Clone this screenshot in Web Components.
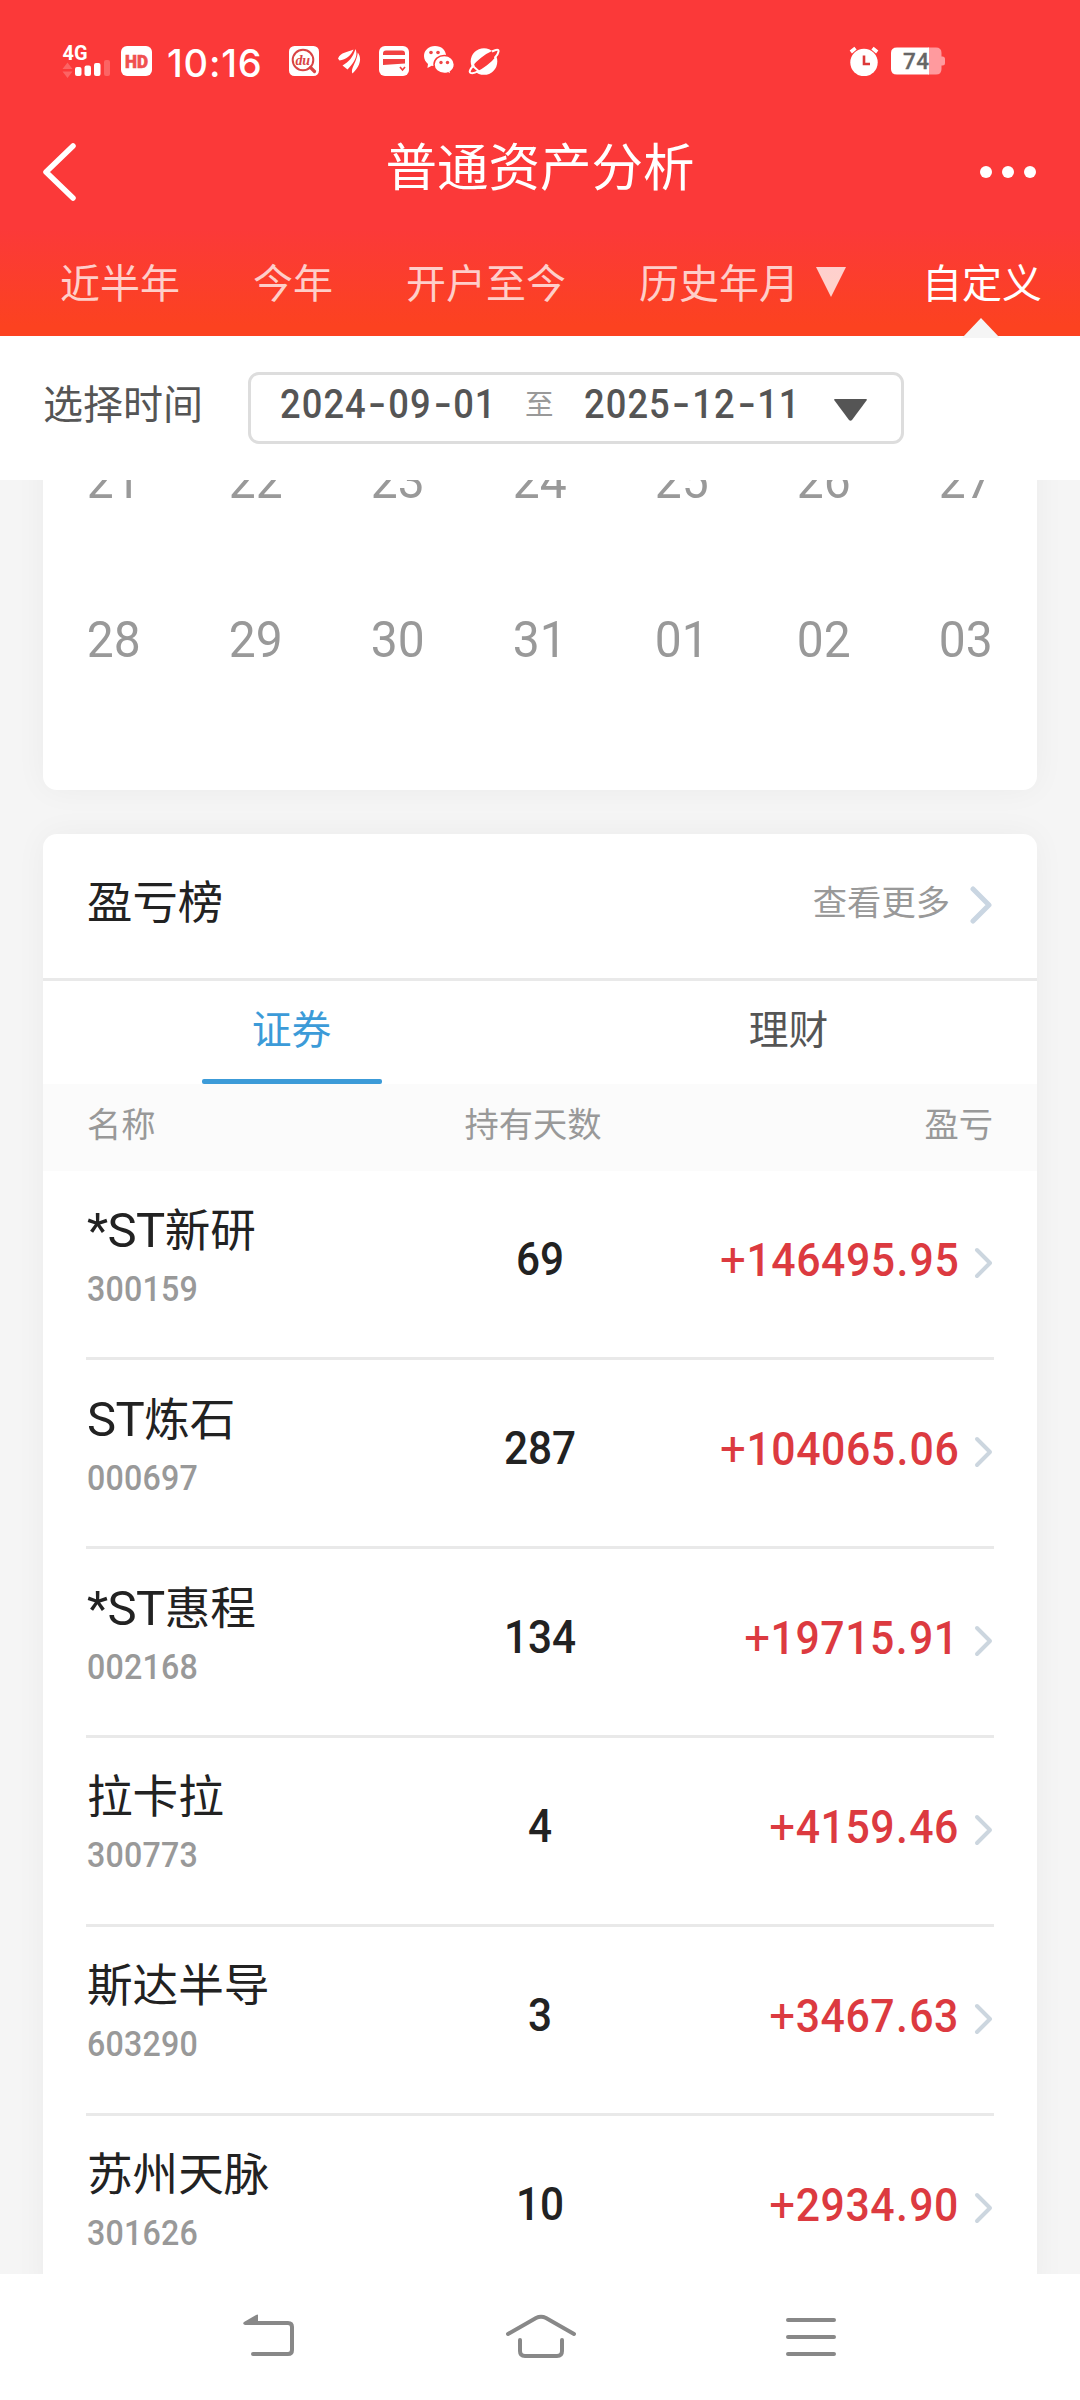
<!DOCTYPE html>
<html lang="zh-CN">
<head>
<meta charset="utf-8">
<title>普通资产分析</title>
<style>
html,body{margin:0;padding:0}
body{width:1080px;height:2400px;overflow:hidden;background:#f5f5f5;font-family:Roboto,"Noto Sans CJK SC",sans-serif;color:#222}
</style>
</head>
<body>
<asset-app></asset-app>
<script>
const define = (name, html) => customElements.define(name, class extends HTMLElement {
  connectedCallback() {
    if (this.shadowRoot) return;
    const t = document.createElement('template');
    t.innerHTML = typeof html === 'function' ? html(this) : html;
    this.attachShadow({mode: 'open'}).appendChild(t.content.cloneNode(true));
  }
});

define('status-bar', `
<style>
:host{display:flex;height:122px;align-items:center;padding:0 135px 0 60px;color:#fff}
svg{display:block;flex:none}
.time{font:500 38px/60px Inter,sans-serif;width:96px;margin:3px 0 0 15px;letter-spacing:.8px;white-space:nowrap}
.sp{flex:1}
</style>
<svg width="50" height="50" viewBox="60 35 50 50" fill="#fff">
  <text x="62.5" y="58.6" font-family="Roboto" font-weight="700" font-size="20" textLength="25" lengthAdjust="spacingAndGlyphs">4G</text>
  <path d="M67.500 61.500l5 6.500h-10zM67.500 77l5-6.500h-10z" opacity=".22"/>
  <rect x="75" y="66" width="6.500" height="9" rx="2"/><rect x="84.500" y="64.500" width="6.500" height="10.500" rx="2"/><rect x="94" y="62" width="6.500" height="13" rx="2"/><rect x="104" y="59" width="6" height="16" rx="2" opacity=".22"/>
</svg>
<svg style="margin-left:11px" width="31" height="30" viewBox="0 0 31 30"><rect width="31" height="30" rx="6" fill="#fff"/><text x="4" y="21.500" fill="#f05050" stroke="#f05050" stroke-width=".6" font-family="Roboto" font-weight="900" font-size="18.500" textLength="23" lengthAdjust="spacingAndGlyphs">HD</text></svg>
<div class="time">10:16</div>
<svg style="margin-left:26px" width="30" height="30" viewBox="0 0 30 30"><rect width="30" height="30" rx="5.500" fill="#fff"/><circle cx="14" cy="14" r="10.300" fill="none" stroke="#d94444" stroke-width="2"/><path d="M21.500 21.500l4 4" stroke="#d94444" stroke-width="3.200" stroke-linecap="round"/><text x="6.500" y="18.500" fill="#d94444" font-family="Liberation Serif" font-style="italic" font-weight="700" font-size="14" textLength="14.500">du</text></svg>
<svg style="margin-left:18px" width="24" height="26" viewBox="0 0 24 26" fill="#fff"><path d="M1 10.500C4 4 10 4.500 16.500 1.500C14 8 9 11.500 2.500 12.500zM5.500 17.500C12 14 16 9 18.500 1C21.500 8 17 15 10.500 21.500zM15.500 25.500C13 21 19.500 15 20.800 4.500C25.500 11 22.500 19 15.500 25.500z"/></svg>
<svg style="margin-left:18px" width="30" height="30" viewBox="0 0 30 30"><rect width="30" height="30" rx="6" fill="#fff"/><path d="M4 7.500q0-3 3-3h16q3 0 3 3v1.500H4zM4 13h22v4.500L4 19z" fill="#f24141"/><path d="M21 21l2.500 3 2.500-3" fill="none" stroke="#f24141" stroke-width="1.700"/></svg>
<svg style="margin-left:14px" width="32" height="30" viewBox="0 0 32 30"><path d="M12 0C5.500 0 1 4.500 1 10c0 3.300 1.600 6 4 8l-.6 4 4.300-2.300C19 21 23 16 23 10S18.500 0 12 0z" fill="#fff"/><path d="M21.300 9.500c-6 0-10.300 4-10.300 9s4.300 9 10.300 9c1.400 0 2.600-.2 3.700-.6l3 1.900-.6-3c2.500-1.700 4-4.300 4-7.300 0-5-4.300-9-10.100-9z" fill="#fff" stroke="#fb3939" stroke-width="1.500"/><g fill="#ef4545"><circle cx="8" cy="6.500" r="1.800"/><circle cx="15" cy="6.500" r="1.800"/><circle cx="18" cy="16.500" r="1.700"/><circle cx="24.500" cy="16.500" r="1.700"/></g></svg>
<svg style="margin-left:13px" width="32" height="30" viewBox="0 0 32 30"><circle cx="16" cy="15.500" r="13.300" fill="#fff"/><ellipse cx="16" cy="15.500" rx="17.300" ry="4.800" transform="rotate(-38 16 15.500)" fill="#fb3939"/><path d="M5.500 19.500Q0 25.500 2.500 26.800T10.500 25L6 21zM24 5.500Q31 2 30.500 5.500T26.500 12" fill="none" stroke="#fff" stroke-width="2"/></svg>
<div class="sp"></div>
<svg width="30" height="30" viewBox="0 0 30 30"><circle cx="15" cy="16.500" r="13.700" fill="#fff"/><path d="M1.800 6L6.500 2.200M28.200 6L23.500 2.200" stroke="#fff" stroke-width="3.600"/><path d="M15 9.500v8.500h6" fill="none" stroke="#dc3838" stroke-width="2.600"/></svg>
<svg style="margin-left:12px" width="54" height="28" viewBox="0 0 54 28"><path d="M37 .5h8q5.500 0 5.500 5.500v3.500h1q2.500 0 2.500 2.500v4q0 2.500-2.500 2.500h-1V22q0 5.500-5.500 5.500h-8z" fill="#ff9a9e"/><path d="M38 .5H6Q0 .5 0 6v16q0 5.500 6 5.500h32z" fill="#fff"/><text x="12" y="22" fill="#666" stroke="#666" stroke-width=".3" font-family="Roboto" font-weight="500" font-size="22.500" textLength="26">74</text></svg>
`);

define('title-bar', `
<style>
:host{display:flex;height:100px;align-items:center;justify-content:space-between;padding:0 43px;color:#fff}
svg{display:block}
h1{margin:0 0 6px;font-size:51.5px;line-height:60px;font-weight:400}
</style>
<svg width="52" height="58" viewBox="0 0 52 58"><path d="M30 3L3 29l27 26" fill="none" stroke="#fff" stroke-width="5.500" stroke-linecap="round" stroke-linejoin="round"/></svg>
<h1><slot></slot></h1>
<svg style="margin:0 0 0 -5px" width="57" height="12" viewBox="0 0 57 12" fill="#fff"><circle cx="6" cy="6" r="6"/><circle cx="28" cy="6" r="6"/><circle cx="50" cy="6" r="6"/></svg>
`);

define('period-tab', `
<style>
:host{display:flex;position:relative;height:114px;align-items:center;font-size:40px;line-height:50px;color:rgba(255,255,255,.76);white-space:nowrap}
:host([active]){color:#fff}
:host([active])::after{content:"";position:absolute;left:40px;bottom:-2px;border:19px solid transparent;border-top:0;border-bottom:20px solid #f5f5f5}
div{padding-top:11px}
</style><div><slot></slot></div>
`);

define('period-tabs', `
<style>
:host{display:flex;height:114px;padding-left:60px}
.g1{margin-left:73px}.g2{margin-left:73px}.g3{margin-left:73px}.g4{margin-left:76px}
svg{display:inline-block;margin-left:17px;vertical-align:0}
</style>
<period-tab>近半年</period-tab><period-tab class="g1">今年</period-tab><period-tab class="g2">开户至今</period-tab><period-tab class="g3">历史年月<svg width="30" height="31" viewBox="0 0 30 31"><path d="M0 0h30L15 30z" fill="currentColor"/></svg></period-tab><period-tab class="g4" active>自定义</period-tab>
`);

define('date-range', `
<style>
:host{display:flex;height:144px;background:#fff;align-items:center;color:#555;font-size:40px}
.l{width:205px;padding:0 0 5px 43px;line-height:50px;white-space:nowrap}
.b{box-sizing:border-box;width:656px;height:72px;border:3px solid #ddd;border-radius:11px;display:flex;align-items:center;padding-left:29px;padding-bottom:8px}
.d{font-size:41.5px;line-height:50px;font-weight:500;letter-spacing:1.200px;width:215px;white-space:nowrap;transform:scaleX(.875);transform-origin:0 50%}
.d i{font-style:normal;display:inline-flex;width:24.600px;justify-content:center;letter-spacing:0}
.d b{font-weight:500;transform:scaleX(1.4)}
.t{font-size:28.500px;line-height:50px;color:#999;width:28px;margin:4px 31px 0 30px}
svg{margin:11px 0 0 35px;flex:none}
</style>
<div class="l">选择时间</div>
<div class="b"><div class="d">2024<i><b>-</b></i>09<i><b>-</b></i>01</div><div class="t">至</div><div class="d">2025<i><b>-</b></i>12<i><b>-</b></i>11</div><svg width="33" height="22" viewBox="0 0 33 22"><path d="M1 0h31q1.500 0 .5 1.500L18 21q-1.500 1.500-3 0L.5 1.500Q-.5 0 1 0z" fill="#555"/></svg></div>
`);

define('ui-card', `
<style>:host{display:block;margin:0 43px;background:#fff;border-radius:14px;box-shadow:0 0 32px rgba(0,0,0,.045)}</style><slot></slot>
`);

define('calendar-grid', () => `
<style>
:host{display:grid;grid-template-columns:repeat(7,142px);grid-auto-rows:159px;padding-bottom:72px;color:#999;font-size:49.500px}
div{display:flex;align-items:center;justify-content:center;padding-top:3px}
span{display:block;transform:scaleX(.97)}
</style>${'21 22 23 24 25 26 27 28 29 30 31 01 02 03'.split(' ').map(d => `<div><span>${d}</span></div>`).join('')}
`);

define('board-header', `
<style>
:host{display:flex;height:144px;align-items:center;border-bottom:3px solid #e9e9e9;padding:0 44px}
h2{margin:0 0 4px;font-size:45.4px;line-height:60px;font-weight:400;flex:1}
.m{font-size:34.3px;line-height:50px;color:#999;margin-bottom:7px}
svg{margin:-2px 0 0 18px}
</style>
<h2><slot></slot></h2><div class="m">查看更多</div>
<svg width="25" height="38" viewBox="0 0 25 38"><path d="M5 3l16 16L5 35" fill="none" stroke="#cad6e2" stroke-width="5" stroke-linecap="round" stroke-linejoin="round"/></svg>
`);

define('board-tabs', `
<style>
:host{display:flex;height:103px;font-size:39.8px;color:#555}
div{flex:1;display:flex;flex-direction:column;align-items:center;justify-content:space-between}
span{line-height:50px;margin-top:25px}
.on{color:#3c9bd8}
.on::after{content:"";width:180px;height:5px;border-radius:2px;background:currentColor}
</style>
<div class="on"><span>证券</span></div><div><span>理财</span></div>
`);

define('list-head', `
<style>
:host{display:flex;justify-content:space-between;height:87px;align-items:center;background:#fbfbfb;color:#999;font-size:34.300px;padding:0 44px}
div{line-height:50px;padding-bottom:6px;width:200px}.c{text-align:center;margin-right:14px}.r{text-align:right}
</style><div>名称</div><div class="c">持有天数</div><div class="r">盈亏</div>
`);

define('stock-row', el => {
  const name = el.getAttribute('name'), m = name.match(/^(\*?ST)?(.*)$/);
  return `
<style>
:host{display:grid;grid-template-columns:1fr 200px 1fr;height:186px;margin:0 43px;border-bottom:3px solid #e9e9e9}
.n{font-size:45.600px;line-height:60px;margin:30px 0 0 1px;white-space:nowrap}
.n span{font-size:49px;letter-spacing:-.600px}
.c{font-size:35px;line-height:40px;color:#999;font-weight:500;letter-spacing:.200px;margin:8px 0 0 1px;transform:scaleX(.92);transform-origin:0 50%}
.d{font-size:46px;line-height:60px;font-weight:500;text-align:center;margin-top:58px;transform:scaleX(.92)}
.a{display:flex;justify-content:flex-end;align-items:flex-start;color:#dc3a40;font-size:46px;line-height:60px;font-weight:500;letter-spacing:.600px;margin-top:59px}
.v{transform:scaleX(.93);transform-origin:100% 50%}
.p{font-weight:400;font-size:49px}
.dot{display:inline-block;width:15px;text-align:center}
svg{margin:17px 0 0 14px}
</style>
<div><div class="n">${m[1] ? `<span>${m[1]}</span>` : ''}${m[2]}</div><div class="c">${el.getAttribute('code')}</div></div>
<div class="d">${el.getAttribute('days')}</div>
<div class="a"><div class="v">${el.getAttribute('gain').replace('+', '<span class="p">+</span>').replace('.', '<span class="dot">.</span>')}</div><svg width="21" height="32" viewBox="0 0 21 32"><path d="M4 3l13 13L4 29" fill="none" stroke="#ccd6df" stroke-width="4" stroke-linecap="round" stroke-linejoin="round"/></svg></div>`;
});

define('nav-bar', `
<style>:host{display:flex;height:126px;background:#fff;align-items:center;padding-left:242px;box-sizing:border-box}svg{display:block}svg+svg{margin-left:209px}svg:last-child{margin-left:208px}</style>
<svg width="54" height="48" viewBox="242 2313 54 48"><path d="M253 2354h35q4 0 4-4v-23q0-4-4-4h-38" fill="none" stroke="#888" stroke-width="4" stroke-linecap="round"/><path d="M258 2315v10h-13q-3-1-1-3l12-7q2-1 2 0z" fill="#888"/></svg>
<svg width="72" height="48" viewBox="505 2313 72 48" fill="none" stroke="#888" stroke-width="4" stroke-linecap="round"><path d="M508 2334l28-16q5-2.500 10 0l28 16M520 2340v11q0 5 5 5h32q5 0 5-5v-11"/></svg>
<svg width="52" height="48" viewBox="785 2313 52 48"><path d="M788 2320h46M788 2337h46M788 2354h46" stroke="#888" stroke-width="4" stroke-linecap="round"/></svg>
`);

define('asset-app', `
<style>
:host{display:flex;flex-direction:column;height:2400px}
header{background:linear-gradient(#fb3939 0,#fb3939 68%,#fc4220 97%)}
main{height:1794px;overflow:hidden}
.cal{margin-top:-80px}
.board{margin-top:44px}
</style>
<header><status-bar></status-bar><title-bar>普通资产分析</title-bar><period-tabs></period-tabs></header>
<date-range></date-range>
<main>
<ui-card class="cal"><calendar-grid></calendar-grid></ui-card>
<ui-card class="board">
<board-header>盈亏榜</board-header><board-tabs></board-tabs><list-head></list-head>
<stock-row name="*ST新研" code="300159" days="69" gain="+146495.95"></stock-row>
<stock-row name="ST炼石" code="000697" days="287" gain="+104065.06"></stock-row>
<stock-row name="*ST惠程" code="002168" days="134" gain="+19715.91"></stock-row>
<stock-row name="拉卡拉" code="300773" days="4" gain="+4159.46"></stock-row>
<stock-row name="斯达半导" code="603290" days="3" gain="+3467.63"></stock-row>
<stock-row name="苏州天脉" code="301626" days="10" gain="+2934.90"></stock-row>
</ui-card>
</main>
<nav-bar></nav-bar>
`);
</script>
</body>
</html>
